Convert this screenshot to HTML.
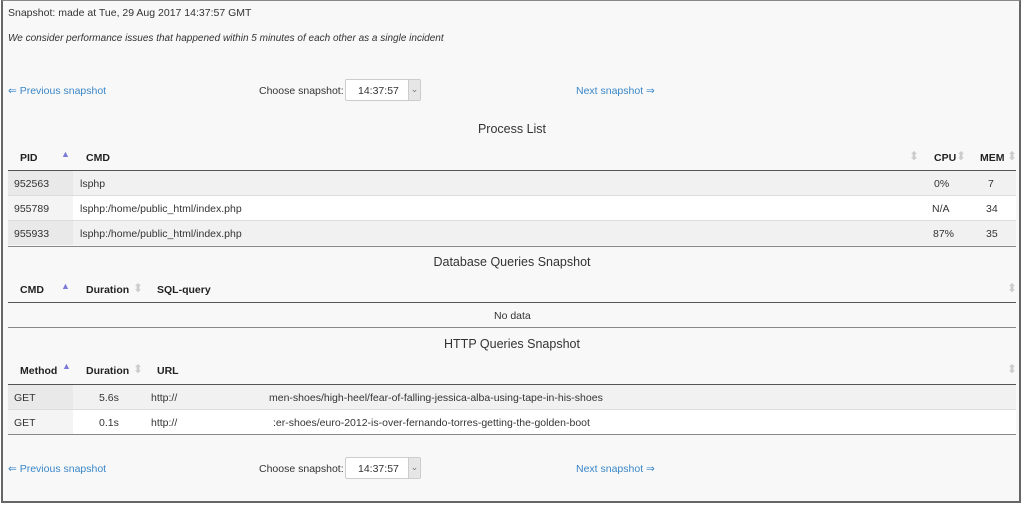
<!DOCTYPE html>
<html><head><style>
body{margin:0;width:1024px;height:506px;background:#fff;font-family:"Liberation Sans",sans-serif;font-size:10.5px;color:#333;position:relative;overflow:hidden}
.frame{position:absolute;left:1px;top:0;width:1020px;height:503px;border:2px solid #666;border-top:1px solid #888;background:#f8f8f8;box-sizing:border-box}
.a{position:absolute;white-space:nowrap;margin-top:1px}
.link{color:#3a87c8}
.sel{position:absolute;width:76px;height:22px;border:1px solid #ccc;background:#fff;box-sizing:border-box;border-radius:2px}
.sel span{position:absolute;left:12px;top:5px}
.sel i{position:absolute;right:0;top:0;width:11px;height:20px;background:#e6e6e6;border-left:1px solid #ccc;font-style:normal;font-size:9px;text-align:center;line-height:18px;color:#777}
.title{position:absolute;left:8px;width:1008px;text-align:center;font-size:12.5px;color:#333;margin-top:1px}
.hline{position:absolute;left:8px;width:1008px;height:1px;background:#555}
.sline{position:absolute;left:8px;width:1008px;height:1px;background:#ddd}
.row{position:absolute;left:8px;width:1008px;height:24px}
.th{font-weight:bold;color:#222}
.arr{color:#7a7ad8;font-size:9px}
.sa{color:#ccc;font-size:12px}
</style></head><body>
<div class="frame"></div>
<div class="a" style="left:8px;top:6px">Snapshot: made at Tue, 29 Aug 2017 14:37:57 GMT</div>
<div class="a" style="left:8px;top:32px;font-style:italic;font-size:10px">We consider performance issues that happened within 5 minutes of each other as a single incident</div>

<div class="a link" style="left:8px;top:84px">⇐ Previous snapshot</div>
<div class="a" style="left:259px;top:84px">Choose snapshot:</div>
<div class="sel" style="left:345px;top:79px"><span>14:37:57</span><i>⌄</i></div>
<div class="a link" style="left:576px;top:84px">Next snapshot ⇒</div>

<div class="title" style="top:121px">Process List</div>
<div class="a th" style="left:20px;top:151px">PID</div><div class="a arr" style="left:61px;top:148px">▲</div>
<div class="a th" style="left:86px;top:151px">CMD</div><div class="a sa" style="left:909px;top:148px">⬍</div>
<div class="a th" style="left:934px;top:151px">CPU</div><div class="a sa" style="left:956px;top:148px">⬍</div>
<div class="a th" style="left:980px;top:151px">MEM</div><div class="a sa" style="left:1007px;top:148px">⬍</div>
<div class="hline" style="top:170px"></div>
<div class="row" style="top:171px;background:#f1f1f1"><div style="width:65px;height:24px;background:#e9e9e9"></div></div>
<div class="sline" style="top:195px"></div>
<div class="row" style="top:196px;background:#fff"><div style="width:65px;height:24px;background:#f4f4f4"></div></div>
<div class="sline" style="top:220px"></div>
<div class="row" style="top:221px;background:#f1f1f1"><div style="width:65px;height:24px;background:#e9e9e9"></div></div>
<div class="hline" style="top:246px;background:#888"></div>
<div class="a" style="left:14px;top:177px">952563</div><div class="a" style="left:80px;top:177px">lsphp</div><div class="a" style="left:934px;top:177px">0%</div><div class="a" style="left:988px;top:177px">7</div>
<div class="a" style="left:14px;top:202px">955789</div><div class="a" style="left:80px;top:202px">lsphp:/home/public_html/index.php</div><div class="a" style="left:932px;top:202px">N/A</div><div class="a" style="left:986px;top:202px">34</div>
<div class="a" style="left:14px;top:227px">955933</div><div class="a" style="left:80px;top:227px">lsphp:/home/public_html/index.php</div><div class="a" style="left:933px;top:227px">87%</div><div class="a" style="left:986px;top:227px">35</div>

<div class="title" style="top:254px">Database Queries Snapshot</div>
<div class="a th" style="left:20px;top:283px">CMD</div><div class="a arr" style="left:61px;top:280px">▲</div>
<div class="a th" style="left:86px;top:283px">Duration</div><div class="a sa" style="left:133px;top:280px">⬍</div>
<div class="a th" style="left:157px;top:283px">SQL-query</div><div class="a sa" style="left:1007px;top:280px">⬍</div>
<div class="hline" style="top:302px"></div>
<div class="a" style="left:494px;top:309px">No data</div>
<div class="hline" style="top:327px;background:#888"></div>

<div class="title" style="top:336px">HTTP Queries Snapshot</div>
<div class="a th" style="left:20px;top:364px">Method</div><div class="a arr" style="left:62px;top:360px">▲</div>
<div class="a th" style="left:86px;top:364px">Duration</div><div class="a sa" style="left:133px;top:361px">⬍</div>
<div class="a th" style="left:157px;top:364px">URL</div><div class="a sa" style="left:1007px;top:361px">⬍</div>
<div class="hline" style="top:384px"></div>
<div class="row" style="top:385px;background:#f1f1f1"><div style="width:65px;height:24px;background:#e9e9e9"></div></div>
<div class="sline" style="top:409px"></div>
<div class="row" style="top:410px;background:#fff"><div style="width:65px;height:24px;background:#f4f4f4"></div></div>
<div class="hline" style="top:434px;background:#888"></div>
<div class="a" style="left:14px;top:391px">GET</div><div class="a" style="left:99px;top:391px">5.6s</div><div class="a" style="left:151px;top:391px">http://</div><div class="a" style="left:269px;top:391px">men-shoes/high-heel/fear-of-falling-jessica-alba-using-tape-in-his-shoes</div>
<div class="a" style="left:14px;top:416px">GET</div><div class="a" style="left:99px;top:416px">0.1s</div><div class="a" style="left:151px;top:416px">http://</div><div class="a" style="left:273px;top:416px">:er-shoes/euro-2012-is-over-fernando-torres-getting-the-golden-boot</div>

<div class="a link" style="left:8px;top:462px">⇐ Previous snapshot</div>
<div class="a" style="left:259px;top:462px">Choose snapshot:</div>
<div class="sel" style="left:345px;top:457px"><span>14:37:57</span><i>⌄</i></div>
<div class="a link" style="left:576px;top:462px">Next snapshot ⇒</div>
</body></html>
